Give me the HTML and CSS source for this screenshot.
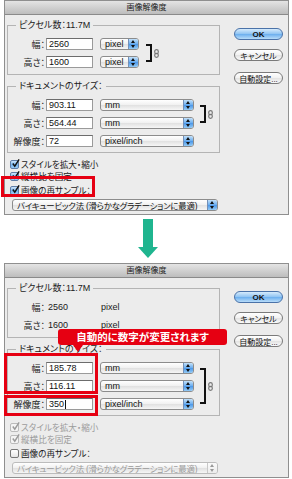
FILE: index.html
```html
<!DOCTYPE html>
<html lang="ja">
<head>
  <meta charset="UTF-8" />
  <title>画像解像度</title>
  <link rel="stylesheet" href="styles.css">
</head>
<body>

<!-- Before -->
<div class="dialog">
  <div class="titlebar">画像解像度</div>
  <div class="dialog-body">
    <div class="main">
      <fieldset class="group">
        <legend>ピクセル数：11.7M</legend>
        <div class="fields">
          <div class="field-rows">
            <div class="row">
              <span class="label">幅：</span>
              <span class="input">2560</span>
              <span class="popup short">pixel<i class="stepper"></i></span>
            </div>
            <div class="row">
              <span class="label">高さ：</span>
              <span class="input">1600</span>
              <span class="popup short">pixel<i class="stepper"></i></span>
            </div>
          </div>
          <div class="link">
            <span class="bracket"></span>
            <svg class="chain" width="5" height="9" viewBox="0 0 5 9"><rect x="0.7" y="0.7" width="3.6" height="4" rx="1.8" fill="none" stroke="#777" stroke-width="1.2"/><rect x="0.7" y="4.3" width="3.6" height="4" rx="1.8" fill="none" stroke="#777" stroke-width="1.2"/></svg>
          </div>
        </div>
      </fieldset>

      <fieldset class="group second">
        <legend>ドキュメントのサイズ：</legend>
        <div class="fields">
          <div class="field-rows">
            <div class="row">
              <span class="label">幅：</span>
              <span class="input">903.11</span>
              <span class="popup long">mm<i class="stepper"></i></span>
            </div>
            <div class="row">
              <span class="label">高さ：</span>
              <span class="input">564.44</span>
              <span class="popup long">mm<i class="stepper"></i></span>
            </div>
            <div class="row">
              <span class="label">解像度：</span>
              <span class="input">72</span>
              <span class="popup long">pixel/inch<i class="stepper"></i></span>
            </div>
          </div>
          <div class="link two-rows">
            <span class="bracket"></span>
            <svg class="chain" width="5" height="9" viewBox="0 0 5 9"><rect x="0.7" y="0.7" width="3.6" height="4" rx="1.8" fill="none" stroke="#777" stroke-width="1.2"/><rect x="0.7" y="4.3" width="3.6" height="4" rx="1.8" fill="none" stroke="#777" stroke-width="1.2"/></svg>
          </div>
        </div>
      </fieldset>

      <div class="checks">
        <div class="check"><span class="box checked"><svg viewBox="0 0 10 10"><path d="M2 5 L4.2 8 L9 0.5" /></svg></span>スタイルを拡大・縮小</div>
        <div class="check"><span class="box checked"><svg viewBox="0 0 10 10"><path d="M2 5 L4.2 8 L9 0.5" /></svg></span>縦横比を固定</div>
        <div class="check resample"><span class="box checked"><svg viewBox="0 0 10 10"><path d="M2 5 L4.2 8 L9 0.5" /></svg></span>画像の再サンプル：</div>
      </div>
      <span class="popup method"><span class="method-text">バイキュービック法 (滑らかなグラデーションに最適)</span><i class="stepper"></i></span>
    </div>

    <div class="buttons">
      <span class="btn default">OK</span>
      <span class="btn">キャンセル</span>
      <span class="btn auto">自動設定...</span>
    </div>
  </div>

  <div class="mark mark-resample"></div>
</div>

<div class="arrow">
  <span class="shaft"></span>
  <span class="head"></span>
</div>

<!-- After -->
<div class="dialog">
  <div class="titlebar">画像解像度</div>
  <div class="dialog-body">
    <div class="main">
      <fieldset class="group">
        <legend>ピクセル数：11.7M</legend>
        <div class="field-rows">
          <div class="row">
            <span class="label">幅：</span>
            <span class="value">2560</span>
            <span class="unit">pixel</span>
          </div>
          <div class="row">
            <span class="label">高さ：</span>
            <span class="value">1600</span>
            <span class="unit">pixel</span>
          </div>
        </div>
      </fieldset>

      <fieldset class="group second">
        <legend>ドキュメントのサイズ：</legend>
        <div class="fields">
          <div class="field-rows">
            <div class="row">
              <span class="label">幅：</span>
              <span class="input">185.78</span>
              <span class="popup long">mm<i class="stepper"></i></span>
            </div>
            <div class="row">
              <span class="label">高さ：</span>
              <span class="input">116.11</span>
              <span class="popup long">mm<i class="stepper"></i></span>
            </div>
            <div class="row">
              <span class="label">解像度：</span>
              <span class="input">350<span class="caret"></span></span>
              <span class="popup long">pixel/inch<i class="stepper"></i></span>
            </div>
          </div>
          <div class="link">
            <span class="bracket"></span>
            <svg class="chain" width="5" height="9" viewBox="0 0 5 9"><rect x="0.7" y="0.7" width="3.6" height="4" rx="1.8" fill="none" stroke="#777" stroke-width="1.2"/><rect x="0.7" y="4.3" width="3.6" height="4" rx="1.8" fill="none" stroke="#777" stroke-width="1.2"/></svg>
          </div>
        </div>
      </fieldset>

      <div class="checks">
        <div class="check disabled"><span class="box checked"><svg viewBox="0 0 10 10"><path d="M2 5 L4.2 8 L9 0.5" /></svg></span>スタイルを拡大・縮小</div>
        <div class="check disabled"><span class="box checked"><svg viewBox="0 0 10 10"><path d="M2 5 L4.2 8 L9 0.5" /></svg></span>縦横比を固定</div>
        <div class="check resample"><span class="box"></span>画像の再サンプル：</div>
      </div>
      <span class="popup method disabled"><span class="method-text">バイキュービック法 (滑らかなグラデーションに最適)</span><i class="stepper"></i></span>
    </div>

    <div class="buttons">
      <span class="btn default">OK</span>
      <span class="btn">キャンセル</span>
      <span class="btn auto">自動設定...</span>
    </div>
  </div>

  <div class="callout">自動的に数字が変更されます</div>
  <div class="mark mark-size"></div>
  <div class="mark mark-res"></div>
</div>

</body>
</html>
```

FILE: styles.css
```css
body {
  margin: 0;
  width: 292px;
  background: #fff;
  font-family: "Liberation Sans", "Noto Sans CJK JP", sans-serif;
  font-size: 9px;
  color: #1a1a1a;
  font-feature-settings: "palt";
}

.dialog {
  position: relative;
  margin: 0 3px 0 4px;
  height: 213px;
  border: 1px solid #8f8f8f;
  background: #ececec;
}

.titlebar {
  height: 13px;
  line-height: 13px;
  border-bottom: 1px solid #8a8a8a;
  background: linear-gradient(#e4e4e4, #bdbdbd);
  text-align: center;
  font-size: 8px;
  color: #222;
}

.dialog-body {
  display: flex;
  padding: 5px 5px 0 2px;
}

.main {
  width: 213px;
}

/* groups */

.group {
  margin: 0;
  padding: 8px 0 6px 0;
  border: 1px solid #b4b4b4;
  min-width: 0;
}

.group.second {
  margin-top: 6px;
  padding-bottom: 5px;
}

.group legend {
  margin-left: 8px;
  padding: 0 3px;
  line-height: 10px;
}

.fields {
  display: flex;
}

.field-rows {
  display: flex;
  flex-direction: column;
  gap: 6px;
}

.row {
  display: flex;
  align-items: center;
  height: 12px;
}

.label {
  width: 37px;
  text-align: right;
  margin-right: 1px;
}

.input {
  display: flex;
  align-items: center;
  width: 47px;
  height: 12px;
  box-sizing: border-box;
  border: 1px solid #9a9a9a;
  border-top-color: #6c6c6c;
  background: #fff;
  padding-left: 2px;
  color: #111;
}

.caret {
  width: 1px;
  height: 9px;
  margin-left: 1px;
  background: #111;
}

.value {
  width: 47px;
  padding-left: 2px;
  box-sizing: border-box;
}

.unit {
  padding-left: 8px;
}

/* popup menus */

.popup {
  display: flex;
  align-items: center;
  justify-content: space-between;
  height: 12px;
  box-sizing: border-box;
  margin-left: 7px;
  border: 1px solid #8c8c8c;
  border-radius: 3px;
  background: linear-gradient(#ffffff, #f0f0f0 50%, #e0e0e0 51%, #f6f6f6);
  padding-left: 4px;
  overflow: hidden;
  color: #111;
}

.popup.short { width: 39px; }
.popup.long { width: 94px; }

.popup.method {
  width: 206px;
  margin: 3px 0 0 5px;
  white-space: nowrap;
}

.method-text {
  font-size: 8.4px;
  letter-spacing: -0.2px;
}

.stepper {
  position: relative;
  width: 9px;
  align-self: stretch;
  flex-shrink: 0;
  border-left: 1px solid #7390b8;
  background: linear-gradient(#c3e1fa, #69acee 50%, #4a96e8 51%, #94cbf6);
}

.stepper::before,
.stepper::after {
  content: '';
  position: absolute;
  left: 2px;
  border-left: 2px solid transparent;
  border-right: 2px solid transparent;
}

.stepper::before {
  top: 1px;
  border-bottom: 3px solid #111;
}

.stepper::after {
  bottom: 1px;
  border-top: 3px solid #111;
}

.popup.disabled {
  color: #9a9a9a;
  border-color: #bcbcbc;
}

.popup.disabled .stepper {
  border-left-color: #c8c8c8;
  background: linear-gradient(#fbfbfb, #ececec);
}

.popup.disabled .stepper::before { border-bottom-color: #999; }
.popup.disabled .stepper::after { border-top-color: #999; }

/* link bracket */

.link {
  display: flex;
  align-items: center;
  margin-left: 7px;
  padding: 6px 0;
}

.link.two-rows {
  padding: 6px 0 24px;
}

.group.second .link {
  margin-left: 6px;
}

.bracket {
  width: 4px;
  align-self: stretch;
  border: 2px solid #111;
  border-left: none;
}

.chain {
  margin-left: 2px;
}

/* checkboxes */

.checks {
  margin-top: 5px;
  padding-left: 3px;
  font-size: 8.6px;
}

.check {
  display: flex;
  align-items: center;
  height: 12px;
}

.check.resample {
  margin-top: 2px;
}

.box {
  position: relative;
  width: 9px;
  height: 9px;
  box-sizing: border-box;
  margin-right: 2px;
  border: 1px solid #777;
  border-radius: 2px;
  background: linear-gradient(#fff, #e6e6e6);
}

.box.checked {
  border-color: #5f7ea8;
  background: linear-gradient(#cfe6fb, #72b2ef 55%, #9ccdf6);
}

.box svg {
  position: absolute;
  left: 0;
  top: -2px;
  width: 9px;
  height: 9px;
  fill: none;
  stroke: #111;
  stroke-width: 1.6;
}

.check.disabled {
  color: #9c9c9c;
}

.check.disabled .box {
  border-color: #bbb;
  background: #f4f4f4;
}

.check.disabled .box svg {
  stroke: #9a9a9a;
}

/* buttons */

.buttons {
  display: flex;
  flex-direction: column;
  margin-left: auto;
  padding-top: 8px;
  width: 49px;
}

.btn {
  display: flex;
  align-items: center;
  justify-content: center;
  height: 12px;
  box-sizing: border-box;
  border: 1px solid #7a7a7a;
  border-radius: 6px;
  background: linear-gradient(#ffffff, #f1f1f1 50%, #e2e2e2 51%, #fafafa);
  font-size: 8px;
  color: #111;
  margin-top: 9px;
}

.btn.default {
  margin-top: 0;
  border-color: #4a72a8;
  background: linear-gradient(#d6ebfc, #8ec3f2 50%, #6aaeee 51%, #b8dcf9);
  font-weight: bold;
}

.btn.auto {
  margin-top: 11px;
}

/* arrow */

.arrow {
  display: flex;
  flex-direction: column;
  align-items: center;
  width: 20px;
  margin: 4px 0 5px 138px;
}

.shaft {
  width: 10px;
  height: 28px;
  background: #1fb58f;
}

.head {
  border-left: 10px solid transparent;
  border-right: 10px solid transparent;
  border-top: 11px solid #1fb58f;
}

/* annotations */

.mark {
  position: absolute;
  box-sizing: border-box;
  border: 3px solid #e60012;
}

.mark-resample {
  left: -4px;
  top: 175px;
  width: 94px;
  height: 21px;
}

.mark-size {
  left: -1px;
  top: 89px;
  width: 94px;
  height: 41px;
}

.mark-res {
  left: -1px;
  top: 131px;
  width: 94px;
  height: 21px;
}

.callout {
  position: absolute;
  left: 53px;
  top: 65px;
  width: 169px;
  height: 16px;
  line-height: 16px;
  border-radius: 3px;
  background: #e60012;
  color: #fff;
  font-family: "Noto Sans CJK JP", sans-serif;
  font-size: 10.5px;
  font-weight: bold;
  text-align: center;
}

.callout::after {
  content: '';
  position: absolute;
  left: 15px;
  top: 16px;
  border-left: 5px solid transparent;
  border-right: 5px solid transparent;
  border-top: 7px solid #e60012;
}
```
